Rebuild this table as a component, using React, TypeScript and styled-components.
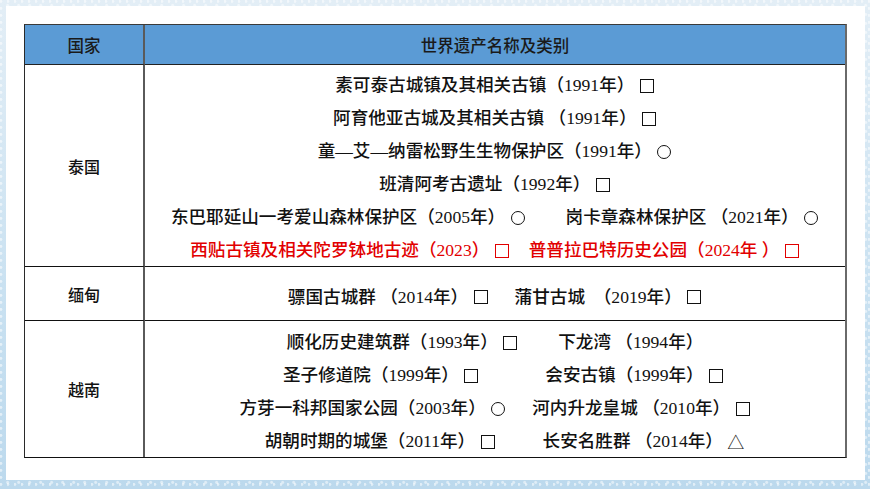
import React from 'react'
import styled, { createGlobalStyle } from 'styled-components'

type Entry = string | number

interface Line {
  parts: Entry[]
  red?: boolean
  shift?: number
}

interface CountryRow {
  country: string
  height: number
  padTop: number
  lines: Line[]
}

const rows: CountryRow[] = [
  {
    country: '泰国',
    height: 202,
    padTop: 5,
    lines: [
      { parts: ['素可泰古城镇及其相关古镇（1991年） □'] },
      { parts: ['阿育他亚古城及其相关古镇 （1991年） □'] },
      { parts: ['童—艾—纳雷松野生生物保护区（1991年） ○'] },
      { parts: ['班清阿考古遗址（1992年） □'] },
      { parts: ['东巴耶延山一考爱山森林保护区（2005年） ○', 40, '岗卡章森林保护区 （2021年） ○'] },
      { parts: ['西贴古镇及相关陀罗钵地古迹（2023） □', 19, '普普拉巴特历史公园（2024年 ） □'], red: true },
    ],
  },
  {
    country: '缅甸',
    height: 54,
    padTop: 7,
    lines: [{ parts: ['骠国古城群 （2014年） □', 26, '蒲甘古城  （2019年） □'] }],
  },
  {
    country: '越南',
    height: 136,
    padTop: 6,
    lines: [
      { parts: ['顺化历史建筑群（1993年） □', 40, '下龙湾 （1994年）'] },
      { parts: ['圣子修道院（1999年） □', 66, '会安古镇（1999年） □'], shift: 17 },
      { parts: ['方芽一科邦国家公园（2003年） ○', 26, '河内升龙皇城 （2010年） □'] },
      { parts: ['胡朝时期的城堡（2011年） □', 47, '长安名胜群 （2014年） △'], shift: 19 },
    ],
  },
]

// split the category marks (□ ○ △) out so they can be drawn at the reference size
const renderText = (text: string) =>
  text.split(/([□○△])/).map((chunk, i) => {
    if (chunk === '□') return <Square key={i} />
    if (chunk === '○') return <Circle key={i} />
    if (chunk === '△') return <Triangle key={i}>△</Triangle>
    return <React.Fragment key={i}>{chunk}</React.Fragment>
  })

const GlobalStyle = createGlobalStyle`
  html, body {
    margin: 0;
    padding: 0;
  }
  body {
    font-family: "Liberation Serif", "Noto Sans CJK SC", serif;
  }
`

const App = () => {
  return (
    <Page>
      <GlobalStyle />
      <Card>
        <Table $rows={rows.map((r) => r.height)}>
          <HeaderCell $divider>国家</HeaderCell>
          <HeaderCell>世界遗产名称及类别</HeaderCell>
          {rows.map((row, i) => {
            const last = i === rows.length - 1
            return (
              <React.Fragment key={row.country}>
                <CountryCell $last={last}>{row.country}</CountryCell>
                <ListCell $last={last} $padTop={row.padTop}>
                  {row.lines.map((line, j) => (
                    <TextLine key={j} $red={line.red} $shift={line.shift || 0}>
                      {line.parts.map((p, k) =>
                        typeof p === 'number' ? <Gap key={k} $w={p} /> : <Item key={k}>{renderText(p)}</Item>
                      )}
                    </TextLine>
                  ))}
                </ListCell>
              </React.Fragment>
            )
          })}
        </Table>
      </Card>
    </Page>
  )
}

const Page = styled.div`
  width: 870px;
  height: 489px;
  box-sizing: border-box;
  padding: 6px 5px 9px 6px;
  background-color: #cfe4f2;
  background-image:
    radial-gradient(circle at 12% 20%, rgba(255, 255, 255, 0.55) 0 1px, transparent 2px),
    radial-gradient(circle at 70% 60%, rgba(255, 255, 255, 0.5) 0 1px, transparent 2px),
    linear-gradient(180deg, #e3eef6 0%, #c9e1f1 60%, #bcd9ed 100%);
  background-size: 7px 7px, 11px 9px, 100% 100%;
`

const Card = styled.div`
  height: 100%;
  box-sizing: border-box;
  background: #ffffff;
  padding: 18px 18px 0 18px;
`

const Table = styled.div<{ $rows: number[] }>`
  display: grid;
  grid-template-columns: 120px 1fr;
  grid-template-rows: 40px ${(p) => p.$rows.map((h) => `${h}px`).join(' ')};
  border-top: 1px solid #3a3a3a;
  border-left: 1px solid #2a2a2a;
  border-right: 2px solid #6a6a6a;
  border-bottom: 1px solid #111111;
  color: #111111;
`

const HeaderCell = styled.div<{ $divider?: boolean }>`
  display: flex;
  align-items: center;
  justify-content: center;
  box-sizing: border-box;
  background: #5b9bd5;
  border-bottom: 1px solid #222222;
  border-right: ${(p) => (p.$divider ? '2px solid #5a5a5a' : 'none')};
  font-size: 16.5px;
  font-weight: 500;
  color: #1a1a1a;
  padding-top: 1px;
`

const CountryCell = styled.div<{ $last: boolean }>`
  display: flex;
  align-items: center;
  justify-content: center;
  box-sizing: border-box;
  border-right: 2px solid #5a5a5a;
  border-bottom: ${(p) => (p.$last ? 'none' : '1px solid #111111')};
  font-size: 16px;
  font-weight: 500;
`

const ListCell = styled.div<{ $last: boolean; $padTop: number }>`
  display: flex;
  flex-direction: column;
  justify-content: center;
  box-sizing: border-box;
  padding-top: ${(p) => p.$padTop}px;
  border-bottom: ${(p) => (p.$last ? 'none' : '1px solid #111111')};
  font-size: 17.6px;
  font-weight: 500;
`

const TextLine = styled.div<{ $red?: boolean; $shift: number }>`
  display: flex;
  justify-content: center;
  align-items: center;
  white-space: pre;
  line-height: 33px;
  padding-left: ${(p) => p.$shift}px;
  color: ${(p) => (p.$red ? '#e20000' : '#111111')};
`

const Item = styled.span`
  display: inline-flex;
  align-items: center;
`

const Gap = styled.span<{ $w: number }>`
  display: inline-block;
  width: ${(p) => p.$w}px;
`

const Square = styled.span`
  display: inline-block;
  box-sizing: border-box;
  width: 14px;
  height: 14px;
  margin: 0 1px 0 1px;
  border: 1.6px solid currentColor;
`

const Circle = styled.span`
  display: inline-block;
  box-sizing: border-box;
  width: 14px;
  height: 14px;
  margin: 0 1px;
  border: 1.6px solid currentColor;
  border-radius: 50%;
`

const Triangle = styled.span`
  font-family: "Noto Sans CJK SC", sans-serif;
  font-weight: 400;
  font-size: 17px;
  line-height: 1;
`

export default App
